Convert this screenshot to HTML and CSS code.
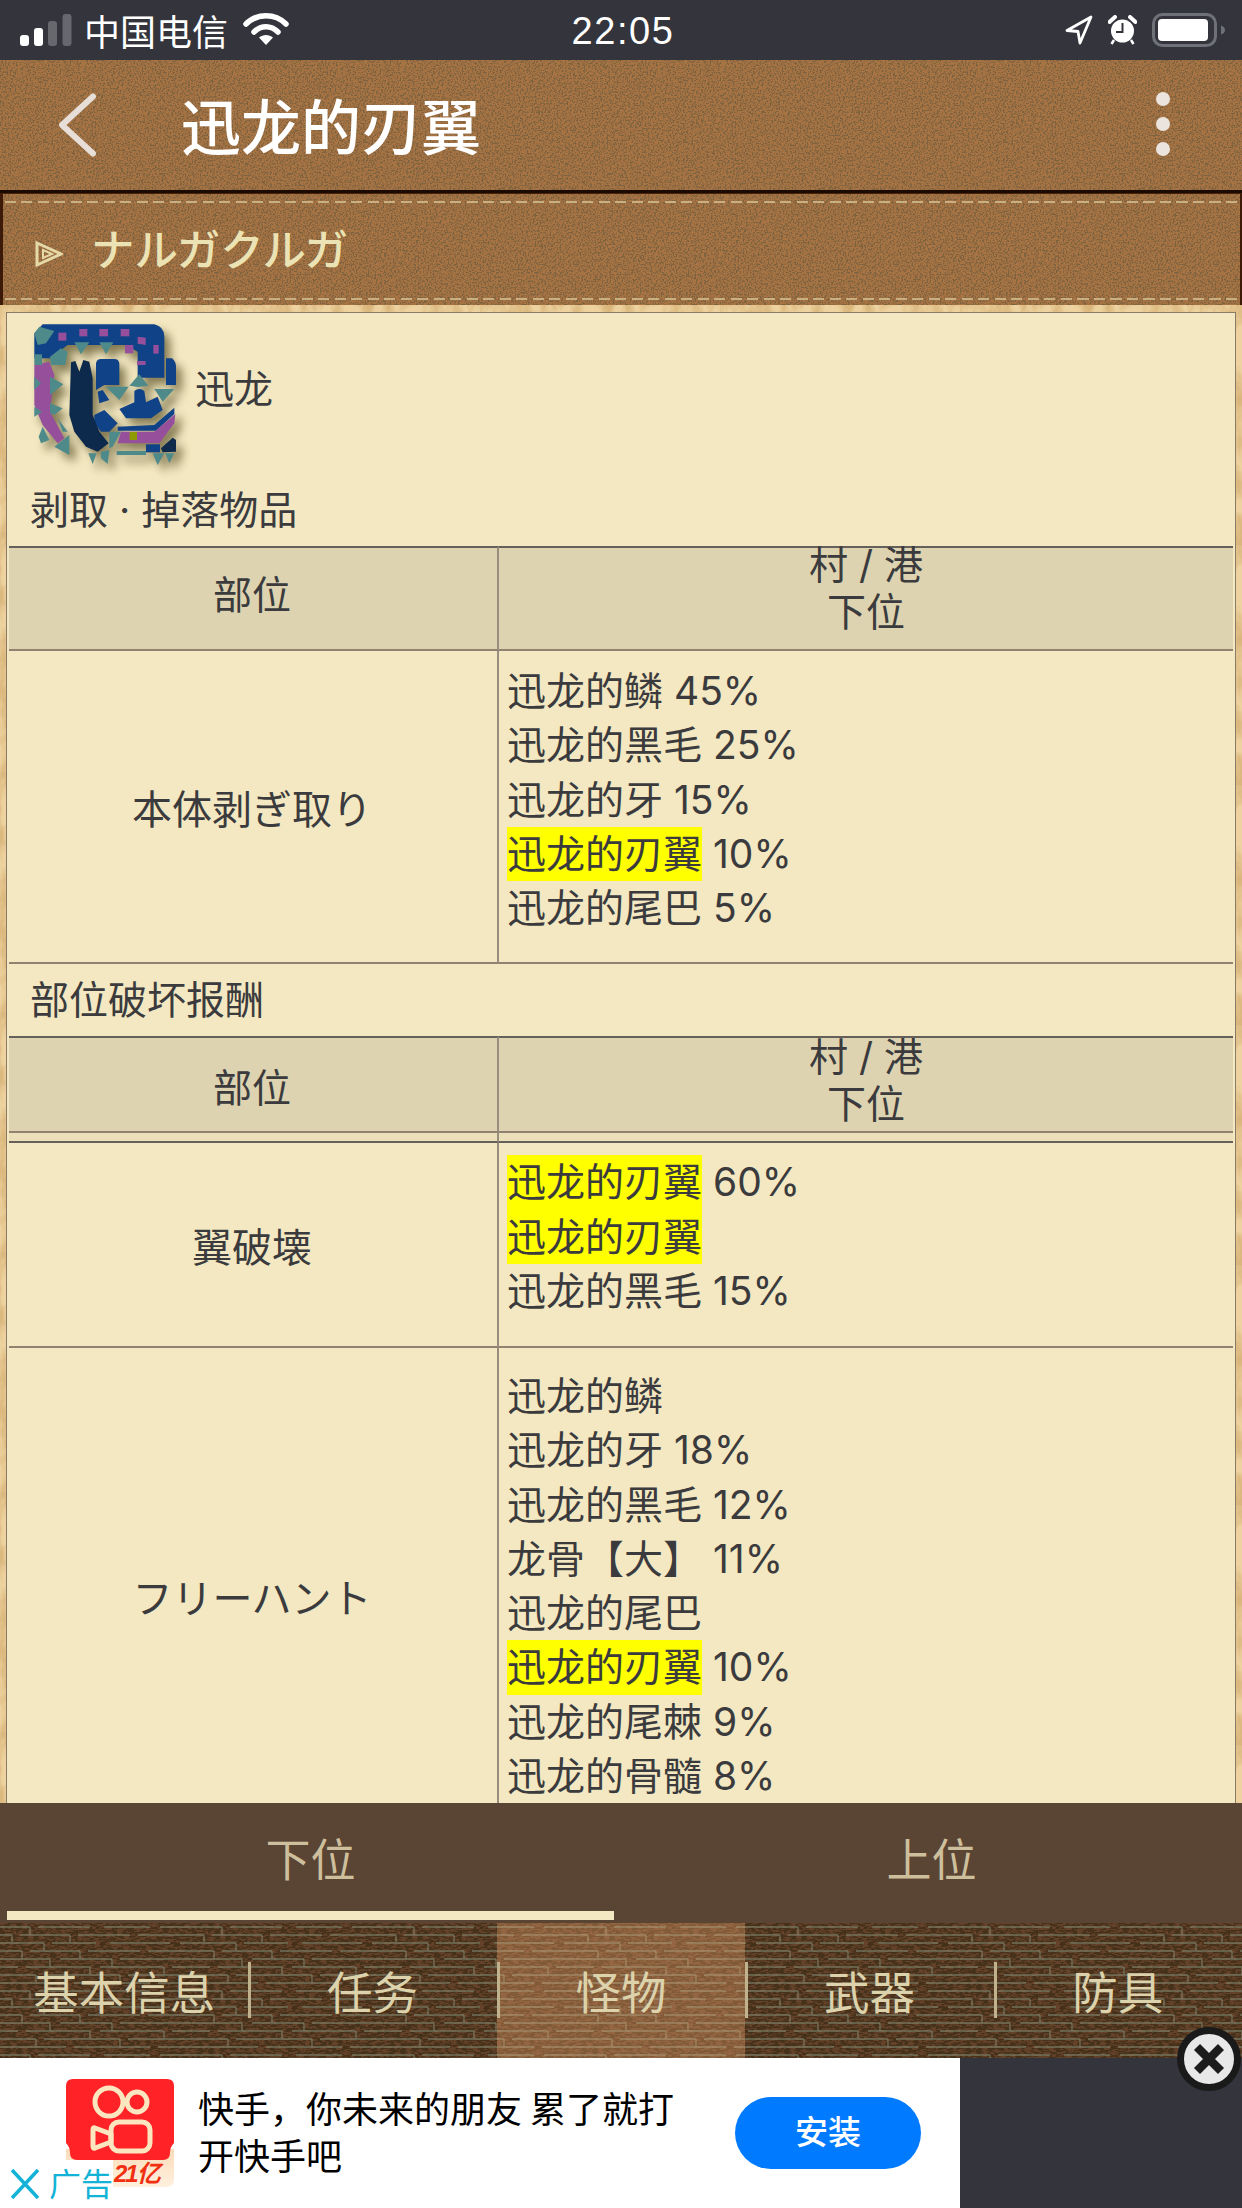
FILE: index.html
```html
<!DOCTYPE html>
<html lang="zh-CN">
<head>
<meta charset="utf-8">
<title>迅龙的刃翼</title>
<link rel="stylesheet" href="styles.css">
</head>
<body>
<div class="app">
  <div class="status">
    <div class="status-left">
      <svg class="signal" width="52" height="32" viewBox="0 0 52 32"><rect x="0" y="21" width="9" height="11" rx="3" fill="#fff"/><rect x="14" y="14" width="9" height="18" rx="3" fill="#fff"/><rect x="28" y="7" width="9" height="25" rx="3" fill="#66686e"/><rect x="42.500" y="0" width="9" height="32" rx="3" fill="#66686e"/></svg>
      <span class="carrier">中国电信</span>
      <svg class="wifi" width="46" height="34" viewBox="0 0 46 34"><path d="M3 12C14 1 32 1 43 12" fill="none" stroke="#fff" stroke-width="5.500" stroke-linecap="round"/><path d="M11 20C18 13 28 13 35 20" fill="none" stroke="#fff" stroke-width="5.500" stroke-linecap="round"/><path d="M16 25.500C20 22 26 22 30 25.500L23 33Z" fill="#fff"/></svg>
    </div>
    <div class="clock">22:05</div>
    <div class="status-right">
      <svg width="28" height="30" viewBox="0 0 28 30"><path d="M26 2L2 15.500L13 16.500L15 28Z" fill="none" stroke="#fff" stroke-width="2.800" stroke-linejoin="round"/></svg>
      <svg width="29" height="30" viewBox="0 0 29 30"><circle cx="14.500" cy="16" r="11.500" fill="#fff"/><path d="M14.500 8V17H8" fill="none" stroke="#33343c" stroke-width="2"/><path d="M1.500 7L7 2M27.500 7L22 2" stroke="#fff" stroke-width="4" stroke-linecap="round"/><path d="M6 25L3.500 29M23 25L25.500 29" stroke="#fff" stroke-width="2.500"/></svg>
      <svg width="74" height="34" viewBox="0 0 74 34"><rect x="1.500" y="1.500" width="62" height="31" rx="9" fill="none" stroke="#6f7178" stroke-width="3"/><rect x="6" y="6" width="50" height="22" rx="4" fill="#fff"/><path d="M69 12.500Q73 14 73 17Q73 20 69 21.500Z" fill="#6f7178"/></svg>
    </div>
  </div>

  <header class="topbar">
    <svg class="back" width="40" height="68" viewBox="0 0 40 68"><path d="M34 6.500L3 35L34 63.500" fill="none" stroke="#e8ded8" stroke-width="6" stroke-linecap="round" stroke-linejoin="round"/></svg>
    <h1 class="title">迅龙的刃翼</h1>
    <div class="dots"><i></i><i></i><i></i></div>
  </header>

  <div class="section">
    <div class="stitch"></div>
    <svg class="tri" width="28" height="28" viewBox="0 0 28 28"><path d="M2 3L26 14L2 25Z" fill="none" stroke="#e6d9a8" stroke-width="3"/><path d="M8 10L17 14L8 18Z" fill="none" stroke="#e6d9a8" stroke-width="2"/></svg>
    <span class="section-name">ナルガクルガ</span>
  </div>

  <main class="main">
    <div class="card">
      <div class="species">
        <svg class="crest" width="160" height="160" viewBox="0 0 480 480">
          <path fill="#0f4287" d="M50 28H385Q415 35 415 65V188H335V110L300 90H125L72 130H25V55Z"/>
          <g fill="#96509b"><rect x="160" y="42" width="24" height="22"/><rect x="97" y="53" width="24" height="24"/><rect x="220" y="42" width="26" height="22"/><rect x="284" y="42" width="26" height="22"/><path d="M335 65L359 68V90L335 86Z"/><rect x="297" y="90" width="25" height="25"/><rect x="382" y="90" width="16" height="26"/><rect x="333" y="138" width="26" height="12"/></g>
          <path fill="#96509b" d="M25 150L70 140L85 180L72 290L115 370L95 385L50 330L25 270Z"/>
          <g fill="#4f8a8b"><path d="M25 55L40 35L85 48L60 85L35 90Z"/><path d="M145 82H190L165 118Z"/><path d="M220 82H262L240 118Z"/><path d="M25 118H48V150H25Z"/><path d="M72 125L105 100L125 110L118 150H75Z"/><path d="M25 185L45 205L25 225Z"/><path d="M72 185L112 208L72 240Z"/><path d="M25 275L48 290L25 305Z"/><path d="M72 265L110 280L85 300L72 295Z"/><path d="M95 310L125 350H110Z"/><path d="M50 335L70 375L45 385L38 365Z"/><path d="M130 360V420L85 395Z"/><path d="M187 415H212L200 447Z"/><path d="M225 410L250 405L245 447L225 430Z"/><path d="M250 350H285L260 395L250 400Z"/><path d="M272 408H360V420H272Z"/><path d="M380 415H415L395 450Z"/><path d="M418 415H445L430 445Z"/><path d="M310 212L340 178L367 212L335 216Z"/><path d="M240 215H308L280 255Z"/><path d="M385 222H445L410 260Z"/></g>
          <path fill="#0f4287" d="M210 145Q212 132 225 132H265Q278 132 280 145V210H235L210 225Z"/>
          <path fill="#0f4287" d="M420 130H438Q450 140 450 155V210H420Z"/>
          <path fill="#0f4287" d="M280 282L325 262V228Q340 216 355 228L360 262L395 245L410 285L375 310H300Z"/>
          <path fill="#0f4287" d="M230 225L250 255L220 265L215 230Z"/>
          <path fill="#0f4287" d="M205 300L235 285L275 325L250 350H225L205 325Z"/>
          <path fill="#0f4287" d="M275 335L385 330L445 278V297L390 347H275Z"/>
          <path fill="#96509b" d="M275 385L285 350H385L448 297L445 325L400 385Z"/>
          <rect x="311" y="351" width="22" height="24" fill="#8f9a00"/>
          <rect x="360" y="388" width="42" height="24" fill="#0f4287"/>
          <path fill="#0d2a4d" d="M135 142L148 138L160 170L172 135L190 140L200 190V300L220 350L248 385L215 410L180 395L145 350L130 300Z"/>
          <path fill="#0d2a4d" d="M405 400L440 368L450 375V410L410 412Z"/>
        </svg>
        <span class="species-name">迅龙</span>
      </div>

      <div class="caption">剥取 · 掉落物品</div>
      <table class="drops">
        <thead>
          <tr class="head head-a">
            <th class="part">部位</th>
            <th class="rank"><div class="rank-text">村 / 港<br>下位</div></th>
          </tr>
        </thead>
        <tbody>
          <tr>
            <td class="part part-name">本体剥ぎ取り</td>
            <td class="items items-a">
              <div class="line">迅龙的鳞 45%</div>
              <div class="line">迅龙的黑毛 25%</div>
              <div class="line">迅龙的牙 15%</div>
              <div class="line"><mark>迅龙的刃翼</mark> 10%</div>
              <div class="line">迅龙的尾巴 5%</div>
            </td>
          </tr>
        </tbody>
      </table>

      <div class="caption">部位破坏报酬</div>
      <table class="drops">
        <thead>
          <tr class="head head-b">
            <th class="part">部位</th>
            <th class="rank"><div class="rank-text">村 / 港<br>下位</div></th>
          </tr>
          <tr class="spacer"><td class="part"></td><td></td></tr>
        </thead>
        <tbody>
          <tr>
            <td class="part part-name">翼破壊</td>
            <td class="items items-b">
              <div class="line"><mark>迅龙的刃翼</mark> 60%</div>
              <div class="line"><mark>迅龙的刃翼</mark></div>
              <div class="line">迅龙的黑毛 15%</div>
            </td>
          </tr>
          <tr>
            <td class="part part-name">フリーハント</td>
            <td class="items items-c">
              <div class="line">迅龙的鳞</div>
              <div class="line">迅龙的牙 18%</div>
              <div class="line">迅龙的黑毛 12%</div>
              <div class="line">龙骨【大】 11%</div>
              <div class="line">迅龙的尾巴</div>
              <div class="line"><mark>迅龙的刃翼</mark> 10%</div>
              <div class="line">迅龙的尾棘 9%</div>
              <div class="line">迅龙的骨髓 8%</div>
            </td>
          </tr>
        </tbody>
      </table>
    </div>
  </main>

  <div class="tabs">
    <div class="tab tab-on">下位</div>
    <div class="tab">上位</div>
  </div>

  <nav class="nav">
    <a class="nav-item">基本信息</a>
    <a class="nav-item">任务</a>
    <a class="nav-item nav-on">怪物</a>
    <a class="nav-item">武器</a>
    <a class="nav-item">防具</a>
  </nav>

  <div class="adbar">
    <div class="ad">
      <div class="ad-icon">
        <svg width="108" height="108" viewBox="0 0 108 108">
          <defs><linearGradient id="fade" x1="0" y1="0" x2="0" y2="1"><stop offset="0" stop-color="#fbdcb8"/><stop offset="1" stop-color="#fff0df"/></linearGradient></defs>
          <path d="M0 70H108V100Q108 108 100 108H8Q0 108 0 100Z" fill="url(#fade)"/>
          <path d="M7 0H101Q108 0 108 7V64Q104 68 104 74Q104 81 97 81H11Q4 81 4 74Q4 68 0 64V7Q0 0 7 0Z" fill="#ff2328"/>
          <g fill="none" stroke="#fbe6bf" stroke-width="5"><circle cx="43" cy="23" r="14"/><circle cx="71" cy="23" r="10"/><rect x="45" y="43" width="39" height="29" rx="8"/><path d="M29 49L45 55V63L29 69Q27 70 27 67V51Q27 48 29 49Z" stroke-linejoin="round"/></g>
        </svg>
        <span class="ad-badge">21亿</span>
      </div>
      <div class="ad-text">快手，你未来的朋友 累了就打<br>开快手吧</div>
      <button class="install">安装</button>
      <div class="ad-label">
        <svg width="30" height="32" viewBox="0 0 30 32"><path d="M2 2L28 30M28 2L2 30" stroke="#12b3d6" stroke-width="3.500" fill="none"/></svg>
        <span>广告</span>
      </div>
    </div>
    <div class="ad-rest"></div>
  </div>

  <div class="close">
    <svg width="34" height="34" viewBox="0 0 34 34"><path d="M5 5L29 29M29 5L5 29" stroke="#1c1c1c" stroke-width="8.500"/></svg>
  </div>
</div>
</body>
</html>
```
FILE: styles.css
```css
* { box-sizing: border-box; }
html, body { margin: 0; padding: 0; }
body {
  width: 1242px;
  height: 2208px;
  overflow: hidden;
  font-family: "Inter", "Noto Sans CJK SC", sans-serif;
  color: #3b3b3e;
}
.app {
  position: relative;
  display: flex;
  flex-direction: column;
  width: 1242px;
  height: 2208px;
  overflow: hidden;
}

/* status bar */
.status {
  flex: 0 0 60px;
  display: grid;
  grid-template-columns: 1fr auto 1fr;
  align-items: center;
  padding: 0 16px 0 20px;
  background: #33343c;
  color: #fff;
}
.status-left { display: flex; align-items: center; }
.carrier { margin-left: 12px; font-size: 36px; line-height: 60px; font-weight: 400; font-family: "Noto Sans CJK SC", sans-serif; }
.wifi { margin-left: 15px; margin-top: -2px; }
.clock { padding-top: 2px; font-family: "Liberation Sans", sans-serif; font-size: 38px; letter-spacing: 1.6px; line-height: 56px; text-align: center; }
.status-right { display: flex; align-items: center; justify-content: flex-end; gap: 15px; }

/* leather header */
.topbar, .section {
  background-color: #a87443;
  background-image: url("data:image/svg+xml,%3Csvg xmlns='http://www.w3.org/2000/svg' width='320' height='320'%3E%3Cfilter id='n'%3E%3CfeTurbulence type='fractalNoise' baseFrequency='.6' numOctaves='4' stitchTiles='stitch'/%3E%3CfeColorMatrix values='0 0 0 0 .2 0 0 0 0 .12 0 0 0 0 .05 0 0 0 5 -2.3'/%3E%3C/filter%3E%3Crect width='320' height='320' filter='url(%23n)'/%3E%3C/svg%3E");
}
.topbar {
  flex: 0 0 133px;
  display: flex;
  align-items: center;
  padding: 0 72px 3px 59px;
  border-bottom: 3px solid #1b0a02;
}
.back { flex: none; }
.title {
  flex: 1;
  margin: 0 0 0 82px;
  font-size: 60px;
  font-weight: 500;
  line-height: 66px;
  color: #fff;
  font-family: "Noto Sans CJK SC", sans-serif;
}
.dots { display: flex; flex-direction: column; gap: 11px; }
.dots i { display: block; width: 14px; height: 14px; border-radius: 50%; background: #ebe4de; }

.section {
  position: relative;
  flex: 0 0 112px;
  display: flex;
  align-items: center;
  padding: 4px 0 0 35px;
  border-left: 3px solid #3d1a08;
  border-right: 2px solid #3d1a08;
  border-top: 1px solid #4a2208;
}
.stitch {
  position: absolute;
  left: 2px; right: 2px; top: 7px; bottom: 5px;
  background-image:
    repeating-linear-gradient(90deg, #c9b083 0 11px, transparent 11px 16.500px),
    repeating-linear-gradient(90deg, #c9b083 0 11px, transparent 11px 16.500px);
  background-size: 100% 2px, 100% 2px;
  background-position: 0 0, 0 100%;
  background-repeat: no-repeat;
}
.tri { flex: none; margin-left: -3px; margin-top: 5px; }
.section-name {
  margin-left: 28px;
  margin-top: -8px;
  font-size: 43.500px;
  line-height: 50px;
  color: #ece3b4;
  font-family: "Noto Sans CJK JP", sans-serif;
  font-weight: 500;
}

/* page body */
.main {
  flex: 1;
  min-height: 0;
  overflow: hidden;
  padding: 7px 6px 0;
  background-color: #eed3a0;
  background-image: url("data:image/svg+xml,%3Csvg xmlns='http://www.w3.org/2000/svg' width='240' height='240'%3E%3Cfilter id='p'%3E%3CfeTurbulence type='fractalNoise' baseFrequency='.06 .03' numOctaves='4' stitchTiles='stitch'/%3E%3CfeColorMatrix values='0 0 0 0 .7 0 0 0 0 .47 0 0 0 0 .2 0 0 0 2.8 -1'/%3E%3C/filter%3E%3Crect width='240' height='240' filter='url(%23p)'/%3E%3C/svg%3E");
}
.card {
  padding: 0 0 0 2px;
  background: #f3e8c1;
  border: 1px solid #8a7a66;
  border-bottom: 0;
  height: 1600px;
}
.species {
  display: flex;
  align-items: flex-start;
  height: 161px;
  padding: 2px 0 0 17px;
}
.crest { flex: none; filter: drop-shadow(6px 7px 5px rgba(95, 85, 45, .75)); }
.species-name { margin: 47px 0 0 9px; font-size: 39px; line-height: 54px; }
.caption {
  height: 72px;
  padding-left: 21px;
  font-size: 39px;
  line-height: 72px;
}

/* tables */
.drops {
  width: 1224px;
  table-layout: fixed;
  border-collapse: separate;
  border-spacing: 0;
  font-size: 39px;
}
.drops th, .drops td {
  padding: 0;
  font-weight: 400;
  border-bottom: 2px solid #8f8270;
}
.part {
  width: 490px;
  text-align: center;
  vertical-align: middle;
  border-right: 2px solid #988d7e;
}
.drops .part { padding-right: 2px; }
.part-name { font-size: 40px; }
.head th {
  background: #ddd3b0;
  border-top: 2px solid #65605a;
}
.head-a { height: 105px; }
.drops .head-a .part { padding-bottom: 13px; }
.head-b { height: 97px; }
.rank { vertical-align: top; }
.rank-text { line-height: 47px; }
.head-a .rank-text { margin-top: -7px; }
.head-b .rank-text { margin-top: -5px; }
.drops .spacer td { height: 10px; background: #ebe0ba; border-bottom: 2px solid #65605a; }
.items { vertical-align: top; padding-left: 8px !important; }
.items-a { padding-top: 13px !important; padding-bottom: 27px !important; }
.items-b { padding-top: 12px !important; padding-bottom: 28px !important; }
.items-c { padding-top: 21px !important; padding-bottom: 40px !important; }
.line { height: 54.250px; line-height: 54.250px; white-space: nowrap; }
mark { display: inline-block; height: 54.250px; background: #ffff00; color: inherit; }

/* tabs */
.tabs {
  flex: 0 0 120px;
  display: grid;
  grid-template-columns: 1fr 1fr;
  background: #5a4434;
}
.tab {
  position: relative;
  padding-top: 12px;
  text-align: center;
  font-size: 45px;
  line-height: 86px;
  color: #cdbf9b;
  font-family: "Noto Sans CJK SC", sans-serif;
  font-weight: 400;
}
.tab-on::after {
  content: "";
  position: absolute;
  left: 7px; right: 7px; bottom: 3px;
  height: 9px;
  background: #f3e8c1;
}

/* bottom nav */
.nav {
  flex: 0 0 135px;
  display: grid;
  grid-template-columns: repeat(5, 1fr);
  align-items: center;
  background-color: #64422a;
  background-image: url("data:image/svg+xml,%3Csvg xmlns='http://www.w3.org/2000/svg' width='192' height='64'%3E%3Cfilter id='b'%3E%3CfeTurbulence type='fractalNoise' baseFrequency='.18 .55' numOctaves='2' stitchTiles='stitch'/%3E%3CfeColorMatrix values='0 0 0 0 .06 0 0 0 0 .03 0 0 0 0 .01 0 0 0 8 -3.4'/%3E%3C/filter%3E%3Crect width='192' height='64' filter='url(%23b)'/%3E%3Cpath d='M0 4H30M38 4H90M104 4H150M160 4H192M0 12H12M20 12H70M78 12H130M138 12H192M0 20H44M52 20H96M110 20H170M180 20H192M0 28H22M30 28H80M88 28H140M148 28H192M0 36H50M60 36H112M120 36H192M0 44H18M26 44H90M100 44H164M172 44H192M0 52H36M44 52H120M128 52H192M0 60H66M74 60H150M158 60H192M30 4V12M12 12V20M70 12V20M44 20V28M22 28V36M80 28V36M50 36V44M112 36V44M164 44V52M90 44V52M120 52V60M36 52V60' stroke='%23848a74' stroke-width='1.300' fill='none' opacity='.7'/%3E%3C/svg%3E");
}
.nav-item {
  display: block;
  position: relative;
  height: 100%;
  padding-top: 4px;
  text-align: center;
  font-size: 45.500px;
  line-height: 127px;
  color: #dcd2ab;
  font-family: "Noto Sans CJK SC", sans-serif;
  font-weight: 400;
}
.nav-item + .nav-item::before {
  content: "";
  position: absolute;
  left: 0; top: 39px;
  width: 3px;
  height: 56px;
  background: #bfb28c;
}
.nav-on { background: rgba(255, 180, 120, .32); }

/* ad */
.adbar {
  flex: 0 0 150px;
  display: flex;
}
.ad {
  position: relative;
  flex: 0 0 960px;
  display: flex;
  align-items: flex-start;
  padding: 21px 0 0 66px;
  background: #fff;
  color: #000;
  font-family: "Noto Sans CJK SC", sans-serif;
}
.ad-icon { position: relative; flex: none; width: 108px; height: 108px; }
.ad-icon svg { display: block; }
.ad-badge {
  position: absolute;
  left: 48px; top: 82px;
  font: italic 700 24px/26px "Liberation Sans", "Noto Sans CJK SC", sans-serif;
  letter-spacing: -2px;
  color: #f03010;
}
.ad-text {
  flex: none;
  width: 537px;
  margin: 5px 0 0 24px;
  font-size: 36px;
  line-height: 47px;
  font-weight: 400;
}
.install {
  flex: none;
  width: 186px;
  height: 72px;
  margin-top: 18px;
  padding: 0 0 6px;
  border: 0;
  border-radius: 36px;
  background: #007aff;
  color: #fff;
  font: 500 33px/66px "Noto Sans CJK SC", sans-serif;
}
.ad-label {
  position: absolute;
  left: 0; bottom: 0;
  display: flex;
  align-items: center;
  width: 113px;
  height: 48px;
  padding-left: 10px;
  background: #fff;
  color: #12b3d6;
  font-size: 32px;
  line-height: 44px;
}
.ad-label span { margin-left: 9px; margin-top: -4px; }
.ad-rest { flex: 1; background: #33343c; }

.close {
  position: absolute;
  left: 1177px;
  top: 2027px;
  display: flex;
  align-items: center;
  justify-content: center;
  width: 64px;
  height: 64px;
  border-radius: 50%;
  background: #e8e8e8;
  border: 7px solid #1a1a1a;
}
```
